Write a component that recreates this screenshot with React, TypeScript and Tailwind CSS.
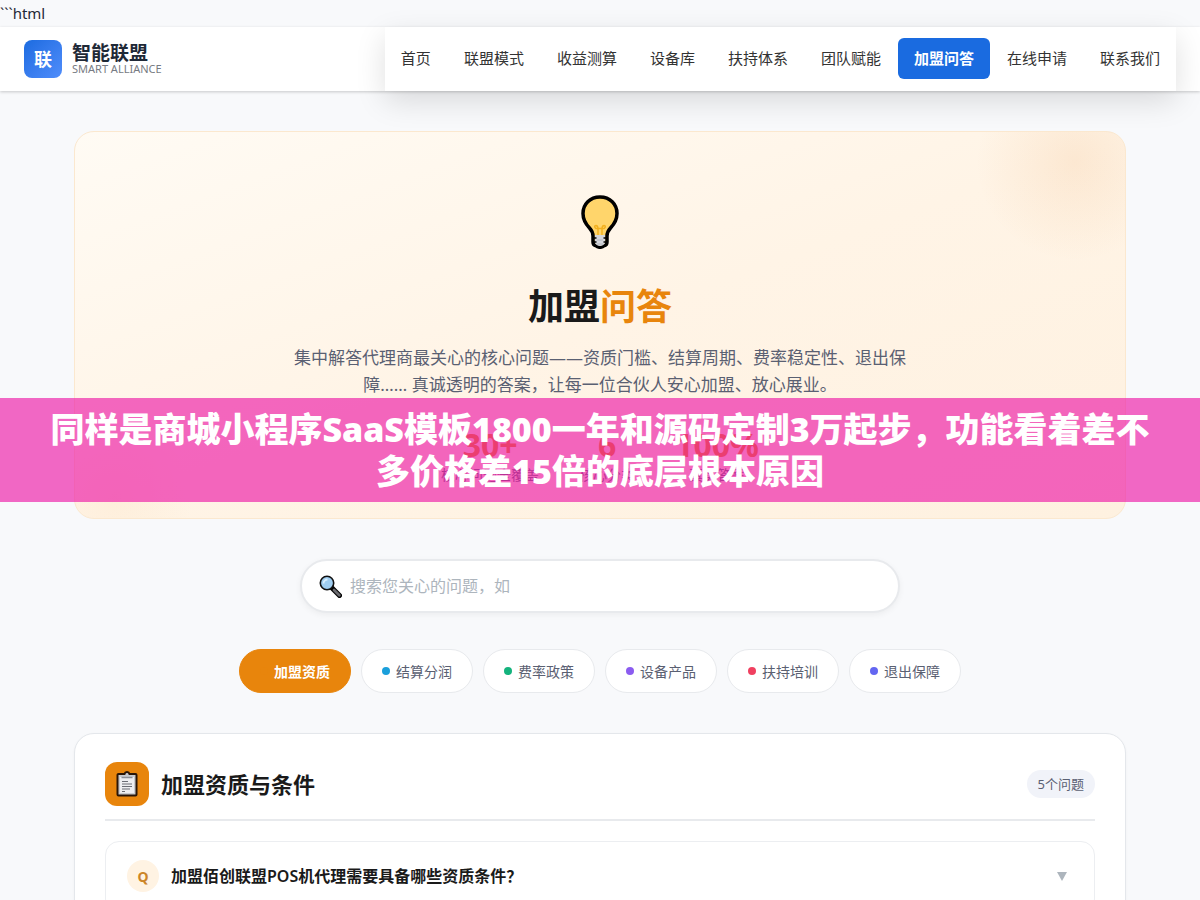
import type { ReactNode } from "react";

const navItems = [
  "首页",
  "联盟模式",
  "收益测算",
  "设备库",
  "扶持体系",
  "团队赋能",
  "加盟问答",
  "在线申请",
  "联系我们",
];

const stats = [
  { value: "30+", label: "核心问题全覆盖" },
  { value: "6", label: "核心分类" },
  { value: "100%", label: "真实答案" },
];

const categories = [
  { name: "加盟资质", dot: "bg-[#e8850c]", active: true },
  { name: "结算分润", dot: "bg-[#1a9fdb]", active: false },
  { name: "费率政策", dot: "bg-[#14b37d]", active: false },
  { name: "设备产品", dot: "bg-[#8b5cf0]", active: false },
  { name: "扶持培训", dot: "bg-[#f04060]", active: false },
  { name: "退出保障", dot: "bg-[#6366f1]", active: false },
];

function BulbIcon() {
  return (
    <svg width="38" height="54" viewBox="0 0 38 54" aria-hidden="true">
      <path
        d="M19 2C9 2 2 9.200 2 18.500c0 6 2.800 10.600 6.500 14.500 2.300 2.500 3.500 5 3.500 8v6c0 2 1.200 3.400 3 3.800 1 1 2.400 1.500 4 1.500s3-.5 4-1.500c1.800-.4 3-1.800 3-3.800v-6c0-3 1.200-5.500 3.500-8C33.200 29.100 36 24.500 36 18.500 36 9.200 29 2 19 2Z"
        fill="#ffd56b"
        stroke="#000"
        strokeWidth="3.500"
      />
      <path
        d="M17 40v-6c0-2.500-1-3.500-2.200-3.500s-1.800 2 .2 3h8c2-1 1.400-3 .2-3S21 31.500 21 34v6"
        fill="none"
        stroke="#f2b01e"
        strokeWidth="1.500"
      />
      <path d="M14 40h10v8c-1 2-3 3-5 3s-4-1-5-3Z" fill="#d5d7dc" />
      <path d="M13 43h2.500M22.500 43H25M13 47h2.500M22.500 47H25" stroke="#000" strokeWidth="1.500" />
      <path d="M16 45h6M16 49h6" stroke="#b4b6be" strokeWidth="1" />
    </svg>
  );
}

function SearchIcon() {
  return (
    <svg width="23" height="23" viewBox="0 0 23 23" aria-hidden="true">
      <path d="M13 13l7.500 7.500" stroke="#000" strokeWidth="5" strokeLinecap="round" />
      <path d="M15 15l5.300 5.300" stroke="#6b6b70" strokeWidth="2.800" strokeLinecap="round" />
      <circle cx="8" cy="8" r="6.700" fill="#9fcdf0" stroke="#111" strokeWidth="1.600" />
      <path d="M4.500 8.500a4 4 0 0 1 4-4" fill="none" stroke="#d9efff" strokeWidth="1.800" />
    </svg>
  );
}

function ClipboardIcon() {
  return (
    <svg width="22" height="26" viewBox="0 0 22 26" aria-hidden="true">
      <path
        d="M2.500 3h6a2.600 2.600 0 0 1 5 0h6a1 1 0 0 1 1 1v19.500a1 1 0 0 1-1 1h-17a1 1 0 0 1-1-1V4a1 1 0 0 1 1-1Z"
        fill="#c9cbd0"
        stroke="#2a1608"
        strokeWidth="2"
      />
      <rect x="4" y="6" width="14" height="16" fill="#eeeef1" />
      <path d="M5.500 6.500h11" stroke="#8d8f96" strokeWidth="1.500" />
      <path d="M6 10.500h6M6 13h10M6 15.500h10M6 18h8M6 20.500h3" stroke="#6b6d75" strokeWidth="1" />
    </svg>
  );
}

function Header() {
  return (
    <header className="relative flex h-16 items-center justify-between bg-white px-6 shadow-[0_1px_3px_rgba(0,0,0,0.2)]">
      <a href="#" className="flex items-center gap-2.5">
        <span className="flex size-[38px] items-center justify-center rounded-lg bg-linear-135 from-[#1a6be0] to-[#4f8dfb] text-lg font-bold text-white">
          联
        </span>
        <span className="flex flex-col">
          <span className="text-[19px] leading-5 font-bold text-[#1f2937]">智能联盟</span>
          <span className="text-[11px] leading-3 text-[#777b83]">SMART ALLIANCE</span>
        </span>
      </a>
      <nav className="flex h-full items-center gap-px bg-white pb-0.5 shadow-[0_10px_30px_rgba(0,0,0,0.13)]">
        {navItems.map((item) => (
          <a
            key={item}
            href="#"
            className={
              item === "加盟问答"
                ? "rounded-md bg-[#1a6be0] px-4 py-2 text-[15px] leading-[25px] font-bold text-white"
                : "px-4 py-2 text-[15px] leading-[25px] text-[#333]"
            }
          >
            {item}
          </a>
        ))}
      </nav>
    </header>
  );
}

function Hero() {
  return (
    <section className="relative overflow-hidden rounded-[20px] border border-[#fbe8cf] bg-linear-160 from-[#fffbf4] via-[#fff4e6] to-[#fef1e0] px-8 pt-[60px] pb-8 text-center">
      <div className="absolute -top-[70px] -right-[50px] size-[200px] rounded-full bg-radial from-[#e07a1c]/10 to-transparent to-70%" />
      <div className="absolute -bottom-[60px] -left-[40px] size-[160px] rounded-full bg-radial from-[#e8850c]/5 to-transparent to-70%" />
      <div className="flex h-[60px] items-center justify-center">
        <BulbIcon />
      </div>
      <h1 className="mt-[31px] text-4xl leading-[47px] font-bold text-[#1a1a1a]">
        加盟<span className="text-[#e8850c]">问答</span>
      </h1>
      <p className="mx-auto mt-[14px] max-w-[620px] text-[17px] leading-[27px] text-[#5a6072]">
        集中解答代理商最关心的核心问题——资质门槛、结算周期、费率稳定性、退出保障…… 真诚透明的答案，让每一位合伙人安心加盟、放心展业。
      </p>
      <div className="mt-7 flex justify-center gap-10">
        {stats.map((stat) => (
          <div key={stat.label}>
            <div className="text-[32px] leading-[38px] font-bold text-[#e8850c]">{stat.value}</div>
            <div className="text-sm leading-[22px] text-[#5a6072]">{stat.label}</div>
          </div>
        ))}
      </div>
    </section>
  );
}

function SearchBox() {
  return (
    <label className="mx-auto mt-10 flex h-[54px] max-w-[600px] items-center gap-2 rounded-full border-2 border-[#e8eaed] bg-white px-[17px] shadow-[0_2px_6px_rgba(0,0,0,0.05)]">
      <SearchIcon />
      <input
        type="search"
        aria-label="搜索问题"
        placeholder="搜索您关心的问题，如"
        className="min-w-0 flex-1 text-base outline-none placeholder:text-[#adb5bd]"
      />
    </label>
  );
}

function Categories() {
  return (
    <div className="mt-9 flex flex-wrap justify-center gap-2.5">
      {categories.map((category) => (
        <button
          key={category.name}
          type="button"
          className={
            category.active
              ? "flex h-11 items-center gap-1.5 rounded-full border border-[#e8850c] bg-[#e8850c] px-5 text-[14px] font-bold text-white"
              : "flex h-11 items-center gap-1.5 rounded-full border border-[#e8eaed] bg-white px-5 text-[14px] text-[#5a6072]"
          }
        >
          <span className={`size-2 rounded-full ${category.dot}`} />
          {category.name}
        </button>
      ))}
    </div>
  );
}

function Question({ children }: { children: ReactNode }) {
  return (
    <button
      type="button"
      className="flex w-full items-center gap-3 rounded-[14px] border border-[#eceef1] bg-white px-[21px] pt-[18px] pb-5 text-left"
    >
      <span className="flex size-8 items-center justify-center rounded-full bg-[#fff3e3] text-[14px] font-bold text-[#cc8529]">
        Q
      </span>
      <span className="flex-1 text-base font-semibold text-[#1a1a1a]">{children}</span>
      <svg width="10" height="9" viewBox="0 0 10 9" className="mr-1.5" aria-hidden="true">
        <path d="M0 0h10L5 9Z" fill="#adb5bd" />
      </svg>
    </button>
  );
}

function FaqSection() {
  return (
    <section className="mt-10 rounded-[20px] border border-[#e4e7eb] bg-white px-[30px] pt-7 pb-8 shadow-[0_1px_3px_rgba(0,0,0,0.04)]">
      <div className="mb-5 flex items-center gap-3 border-b-2 border-[#e8eaed] pb-[13px]">
        <span className="flex size-11 items-center justify-center rounded-xl bg-[#e8850c]">
          <ClipboardIcon />
        </span>
        <h2 className="flex-1 text-[22px] font-bold text-[#1a1a1a]">加盟资质与条件</h2>
        <span className="rounded-full bg-[#f1f3f9] px-[11px] py-1 text-[13px] leading-5 text-[#5a6072]">
          5个问题
        </span>
      </div>
      <Question>加盟佰创联盟POS机代理需要具备哪些资质条件？</Question>
    </section>
  );
}

export default function App() {
  return (
    <div className="relative h-screen overflow-hidden bg-[#f8f9fb] font-['Noto_Sans','Noto_Sans_CJK_SC',sans-serif]">
      <p className="text-[15px] leading-[27px] text-[#1f2937]">```html</p>
      <Header />
      <main className="mx-auto max-w-[1100px] px-6 pt-10">
        <Hero />
        <SearchBox />
        <Categories />
        <FaqSection />
      </main>
      <div className="absolute inset-x-0 top-1/2 -translate-y-1/2 bg-[#ed18a6]/65 px-10 py-2.5 text-center text-[34px] leading-[42px] font-black text-white">
        同样是商城小程序SaaS模板1800一年和源码定制3万起步，功能看着差不多价格差15倍的底层根本原因
      </div>
    </div>
  );
}
